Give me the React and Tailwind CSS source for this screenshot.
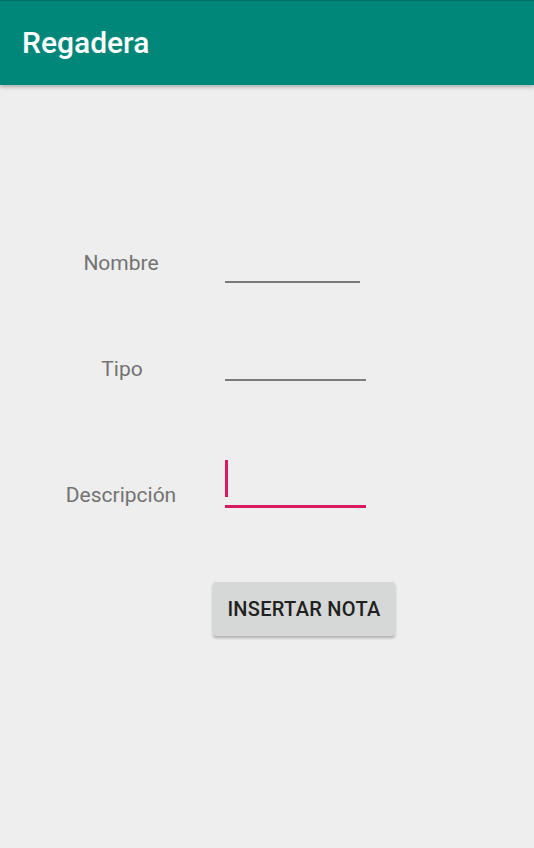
import React from 'react'

const font = { fontFamily: 'Roboto, "Noto Sans", sans-serif' }

const App = () => {
  return (
    <div className="min-h-[848px] w-full bg-[#eeeeee]" style={font}>
      <header className="relative z-10 h-[85px] border-t border-[#006b5f] bg-[#00877a] shadow-[0_2px_4px_rgba(0,0,0,0.28)]">
        <h1 className="pl-[22px] pt-[22px] text-[30px] font-medium leading-[40px] text-white">Regadera</h1>
      </header>

      <main className="flex flex-col pt-[158px]">
        <div className="flex items-end">
          <div className="mb-[8px] w-[130px] ml-[56px] text-center text-[21px] leading-[24px] text-[#737373]">Nombre</div>
          <div className="ml-[39px] h-[40px] w-[135px] border-b-2 border-[#7a7a7a]" />
        </div>

        <div className="mt-[58px] flex items-end">
          <div className="mb-[0px] w-[130px] ml-[56px] pl-[2px] text-center text-[21px] leading-[24px] text-[#737373]">Tipo</div>
          <div className="ml-[39px] h-[40px] w-[141px] border-b-2 border-[#7a7a7a]" />
        </div>

        <div className="mt-[79px] flex items-end">
          <div className="mb-[1px] w-[130px] ml-[56px] text-center text-[21px] leading-[24px] text-[#737373]">Descripción</div>
          <div className="ml-[39px] flex h-[48px] w-[141px] items-start border-b-[3px] border-[#d81b60]">
            <div className="h-[37px] w-[3px] bg-[#d81b60]" />
          </div>
        </div>

        <div className="mt-[74px] flex">
          <button
            type="button"
            className="ml-[213px] h-[54px] w-[182px] rounded-[3px] bg-[#d6d7d7] text-[20px] font-medium tracking-[0.3px] text-[#212121] shadow-[0_2px_3px_rgba(0,0,0,0.28)]"
          >
            INSERTAR NOTA
          </button>
        </div>
      </main>
    </div>
  )
}

export default App
